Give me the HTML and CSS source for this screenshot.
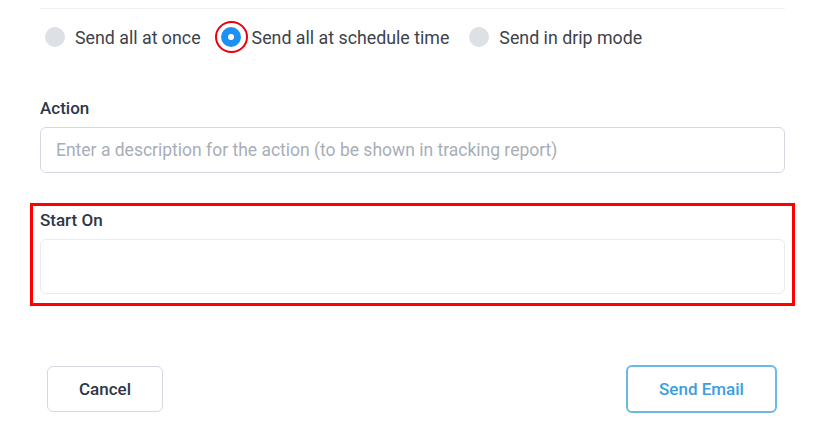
FILE: index.html
```html
<!DOCTYPE html>
<html lang="en">
<head>
<meta charset="utf-8">
<title>Send Email</title>
<link rel="stylesheet" href="styles.css">
</head>
<body>
<div class="form">
  <div class="divider"></div>
  <div class="radios">
    <label class="radio"><span class="dot"></span><span class="rtext">Send all at once</span></label>
    <label class="radio checked"><span class="dot"><span class="ring"></span></span><span class="rtext">Send all at schedule time</span></label>
    <label class="radio"><span class="dot"></span><span class="rtext">Send in drip mode</span></label>
  </div>
  <div class="field action-field">
    <div class="label">Action</div>
    <div class="input">Enter a description for the action (to be shown in tracking report)</div>
  </div>
  <div class="field start-field">
    <div class="label">Start On</div>
    <div class="input tall"></div>
  </div>
  <div class="buttons">
    <button class="btn cancel">Cancel</button>
    <button class="btn send">Send Email</button>
  </div>
</div>
</body>
</html>
```
FILE: styles.css
```css
html, body {
  margin: 0;
  padding: 0;
  background: #ffffff;
}
body {
  font-family: Roboto, "Liberation Sans", Arial, sans-serif;
  padding-top: 8px;
}
.form {
  margin-left: 40px;
  width: 745px;
  display: flex;
  flex-direction: column;
}
.divider {
  height: 1px;
  background: #eef1f4;
}
.radios {
  display: flex;
  align-items: center;
  margin-top: 18px;
  margin-left: 5px;
  height: 20px;
}
.radio {
  display: flex;
  align-items: center;
  gap: 10px;
  margin-right: 20px;
  font-size: 17.8px;
  color: #3d424b;
}
.radio.checked .rtext {
  margin-left: 1px;
}
.dot {
  width: 20px;
  height: 20px;
  border-radius: 50%;
  background: #dde0e5;
  position: relative;
  flex: none;
}
.radio.checked .dot {
  background: #1e90f3;
}
.radio.checked .dot::after {
  content: "";
  position: absolute;
  left: 7px;
  top: 7px;
  width: 6px;
  height: 6px;
  border-radius: 50%;
  background: #ffffff;
}
.ring {
  position: absolute;
  left: -6px;
  top: -6px;
  width: 33px;
  height: 32px;
  box-sizing: border-box;
  border: 2.5px solid #e8000b;
  border-radius: 50%;
}
.field {
  display: flex;
  flex-direction: column;
}
.label {
  font-size: 17px;
  font-weight: 500;
  color: #2d3748;
  line-height: 20px;
}
.action-field {
  margin-top: 51px;
}
.input {
  margin-top: 9px;
  height: 46px;
  box-sizing: border-box;
  border: 1px solid #d5d8e1;
  border-radius: 6px;
  padding: 0 15px;
  display: flex;
  align-items: center;
  font-size: 17.5px;
  color: #a7aeb7;
}
.input.tall {
  height: 55px;
  border-color: #e9ebef;
}
.start-field {
  margin: 30px -10px 0;
  border: 3px solid #ff0000;
  padding: 4px 7px 9px;
}
.buttons {
  display: flex;
  justify-content: space-between;
  align-items: center;
  margin-top: 59px;
  padding: 0 8px 0 7px;
}
.btn {
  font-family: Roboto, "Liberation Sans", Arial, sans-serif;
  font-size: 17px;
  font-weight: 500;
  background: #ffffff;
  border-radius: 6px;
  box-sizing: border-box;
}
.cancel {
  width: 116px;
  height: 46px;
  border: 1px solid #d5d8e1;
  color: #2d3748;
}
.send {
  width: 151px;
  height: 48px;
  border: 2px solid #6cb8e6;
  color: #3a9fdc;
}
```
